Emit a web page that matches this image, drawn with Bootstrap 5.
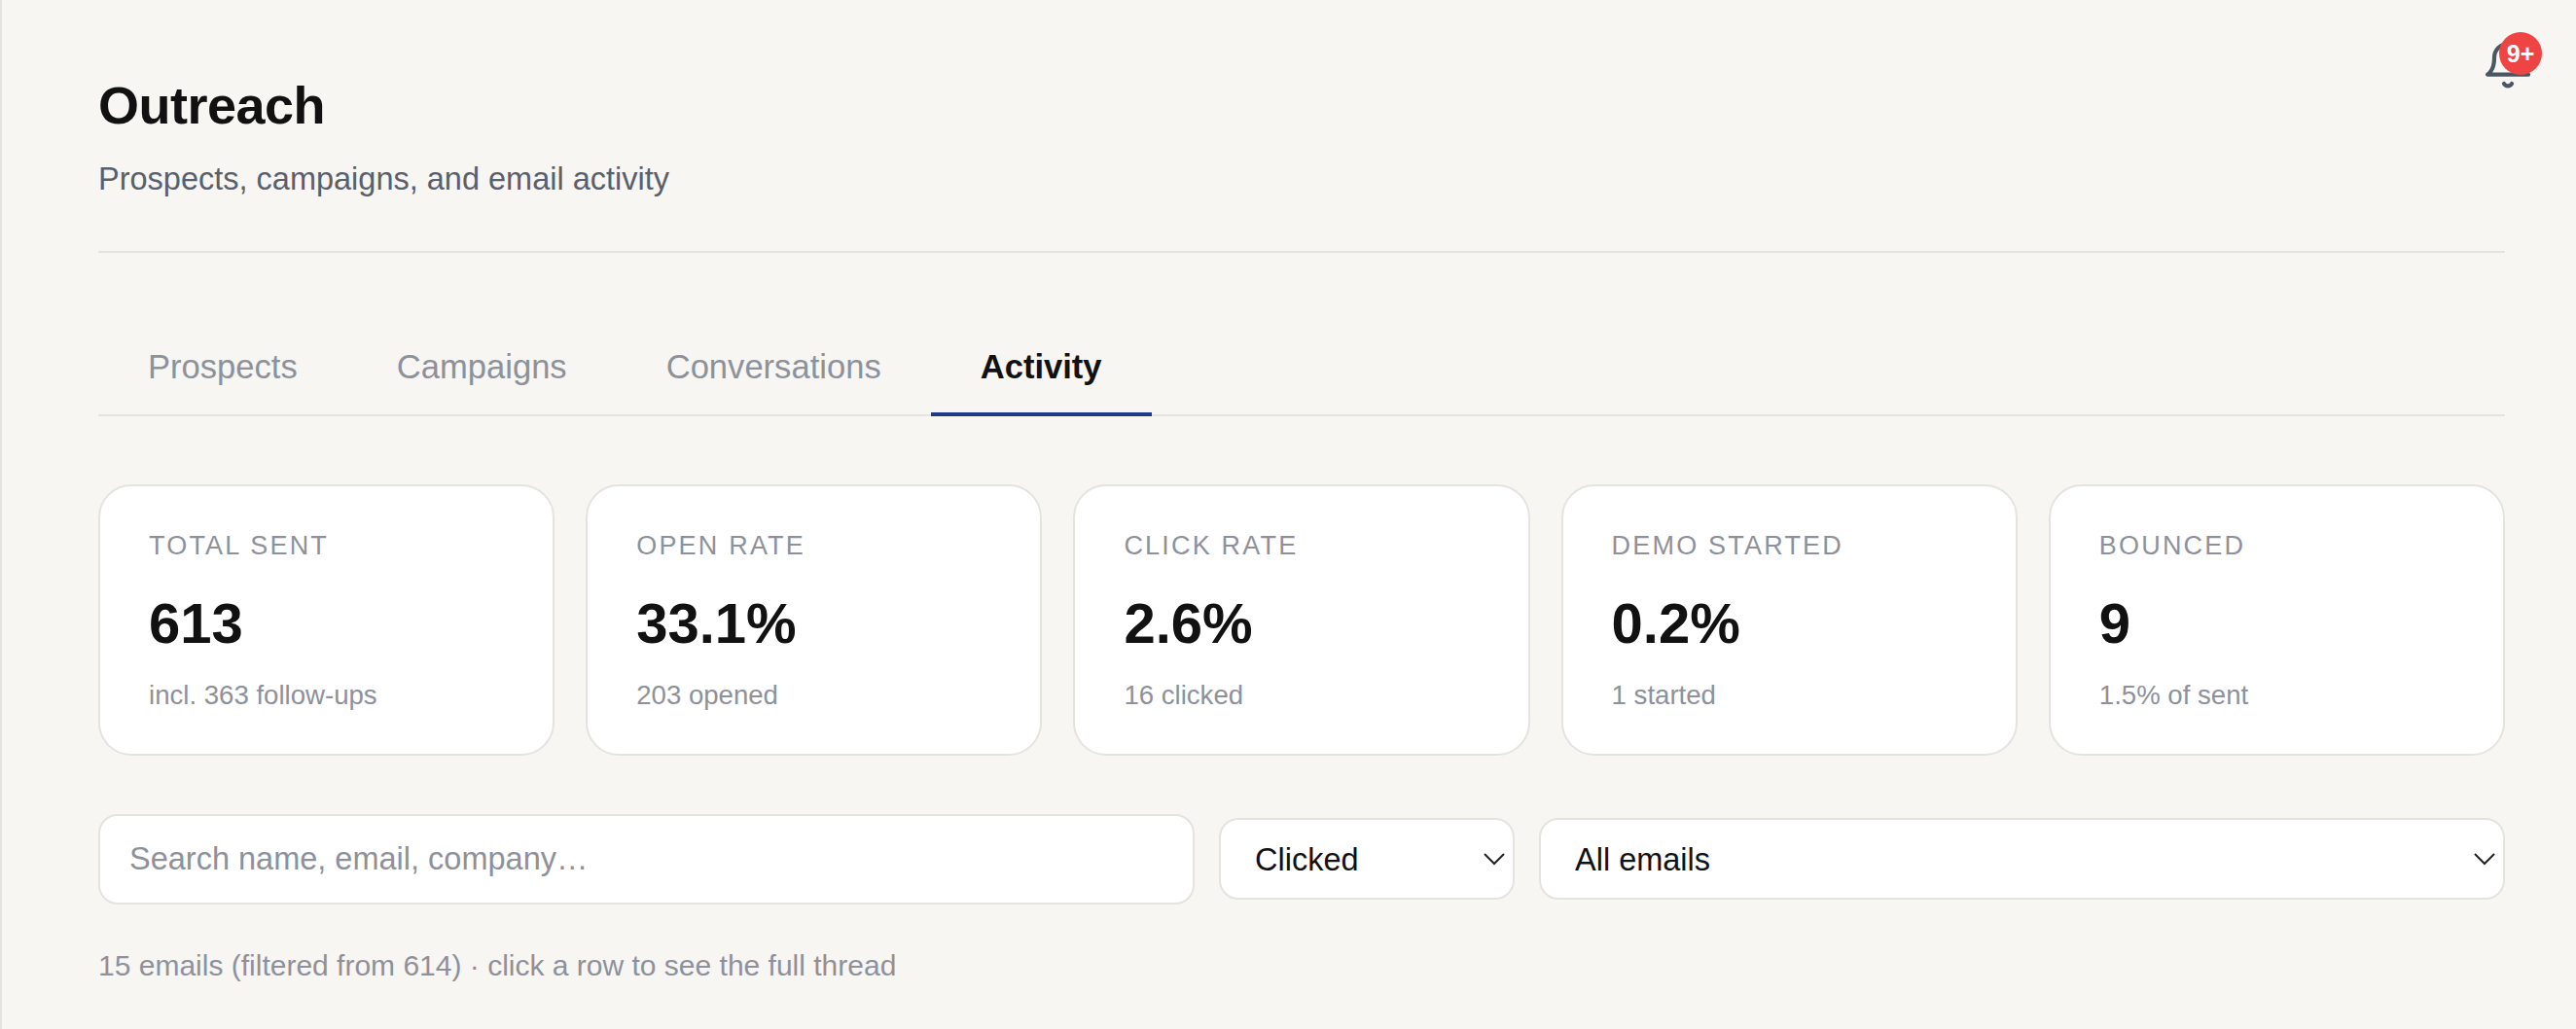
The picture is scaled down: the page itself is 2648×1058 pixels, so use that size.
<!doctype html>
<html lang="en">
<head>
<meta charset="utf-8">
<title>Outreach</title>
<link href="https://cdn.jsdelivr.net/npm/bootstrap@5.3.0/dist/css/bootstrap.min.css" rel="stylesheet">
<style>
html,body{height:100%}
body{background:#f7f6f3;font-family:"Liberation Sans",Arial,sans-serif;color:#111;overflow:hidden}
.shell{min-height:100vh;border-left:2px solid #e5e3de;padding:76px 73px 0 99px;position:relative}
.bell-wrap{position:absolute;left:2548px;top:37px;width:56px;height:56px}
.bell-wrap svg{display:block;width:56px;height:56px;fill:none;stroke:#4b5563;stroke-width:1.8;stroke-linecap:round;stroke-linejoin:round}
.bell-count{position:absolute;left:19px;top:-4px;width:44px;height:44px;border-radius:50%;background:#ef4444;color:#fff;font-size:25px;font-weight:700;line-height:44px;text-align:center}
.page-head{border-bottom:2px solid #e5e3de;padding-bottom:52px;margin-bottom:81px}
.page-title{font-size:54px;font-weight:700;line-height:1.2;letter-spacing:-.5px;margin:0 0 21px;color:#111}
.page-sub{font-size:32.5px;line-height:44px;color:#5b5f6b;margin:0}
.tabbar{border-bottom:2px solid #e5e3de;margin-bottom:70px;flex-wrap:nowrap}
.tabbar .nav-link{font-size:34.6px;line-height:44px;padding:14px 51px 25px;color:#8e919a;border-bottom:4px solid transparent;margin-bottom:-2px}
.tabbar .nav-link.active{color:#111;font-weight:700;border-bottom-color:#1e3a8a}
.stat-grid{display:grid;grid-template-columns:repeat(5,1fr);gap:32px;margin-bottom:60px}
.stat-box{border:2px solid #e5e3de;border-radius:34px;background:#fff;height:279px;padding:43px 50px 0}
.stat-label{font-size:27px;line-height:36px;letter-spacing:2.2px;color:#8e919a;text-transform:uppercase}
.stat-value{font-size:58px;font-weight:700;line-height:72px;margin-top:26px;color:#111}
.stat-note{font-size:27.6px;line-height:36px;color:#8e919a;margin-top:20px}
.filter-row{gap:25px}
.search-box.form-control{flex:0 0 1127px;height:93px;border:2px solid #e5e3de;border-radius:20px;background:#fff;font-size:32.5px;padding:0 30px;color:#111}
.search-box.form-control::placeholder{color:#8e919a;opacity:1}
.pick.form-select{height:84px;border:2px solid #e5e3de;border-radius:20px;font-size:32.5px;padding:2px 50px 0 35px;color:#111;background-color:#fff;background-image:url("data:image/svg+xml,%3csvg xmlns='http://www.w3.org/2000/svg' viewBox='0 0 22 13'%3e%3cpath fill='none' stroke='%23222' stroke-width='2' d='M1 1l10 10L21 1'/%3e%3c/svg%3e");background-position:right 8px center;background-size:22px 13px}
.pick-a.form-select{flex:0 0 304px;width:304px}
.pick-b.form-select{flex:1 1 0}
.result-note{font-size:30px;line-height:40px;color:#8e919a;margin:43px 0 0}
</style>
</head>
<body>
<div class="shell">
  <div class="bell-wrap">
    <svg viewBox="0 0 24 24"><path d="M18 9.5A6 6 0 0 0 6 9.5c0 6-3 7.5-3 7.5h18s-3-1.5-3-7.5"/><path d="M13.73 21a2 2 0 0 1-3.46 0"/></svg>
    <span class="bell-count">9+</span>
  </div>
  <header class="page-head">
    <h1 class="page-title">Outreach</h1>
    <p class="page-sub">Prospects, campaigns, and email activity</p>
  </header>
  <ul class="nav tabbar">
    <li class="nav-item"><a class="nav-link" href="#">Prospects</a></li>
    <li class="nav-item"><a class="nav-link" href="#">Campaigns</a></li>
    <li class="nav-item"><a class="nav-link" href="#">Conversations</a></li>
    <li class="nav-item"><a class="nav-link active" href="#">Activity</a></li>
  </ul>
  <section class="stat-grid">
    <div class="stat-box"><div class="stat-label">Total sent</div><div class="stat-value">613</div><div class="stat-note">incl. 363 follow-ups</div></div>
    <div class="stat-box"><div class="stat-label">Open rate</div><div class="stat-value">33.1%</div><div class="stat-note">203 opened</div></div>
    <div class="stat-box"><div class="stat-label">Click rate</div><div class="stat-value">2.6%</div><div class="stat-note">16 clicked</div></div>
    <div class="stat-box"><div class="stat-label">Demo started</div><div class="stat-value">0.2%</div><div class="stat-note">1 started</div></div>
    <div class="stat-box"><div class="stat-label">Bounced</div><div class="stat-value">9</div><div class="stat-note">1.5% of sent</div></div>
  </section>
  <div class="d-flex align-items-center filter-row">
    <input class="form-control search-box" type="text" placeholder="Search name, email, company…">
    <select class="form-select pick pick-a"><option>Clicked</option></select>
    <select class="form-select pick pick-b"><option>All emails</option></select>
  </div>
  <p class="result-note">15 emails (filtered from 614) · click a row to see the full thread</p>
</div>
</body>
</html>
